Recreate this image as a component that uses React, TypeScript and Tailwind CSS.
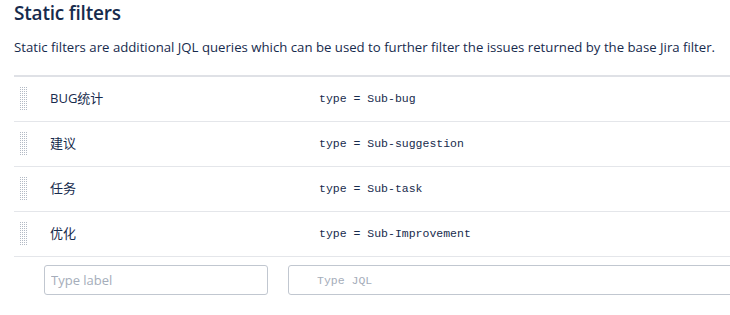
import React from "react";

const filters = [
  { label: "BUG统计", jql: "type = Sub-bug" },
  { label: "建议", jql: "type = Sub-suggestion" },
  { label: "任务", jql: "type = Sub-task" },
  { label: "优化", jql: "type = Sub-Improvement" },
];

function DragHandle() {
  const dots = [];
  for (let r = 0; r < 12; r++) {
    for (let c = 0; c < 4; c++) {
      dots.push(<rect key={r + "-" + c} x={c * 2} y={r * 2} width="1" height="1" fill="#b3bac5" />);
    }
  }
  return (
    <svg width="8" height="24" viewBox="0 0 8 24" className="block">
      {dots}
    </svg>
  );
}

export default function App() {
  return (
    <div
      className="w-[730px] h-[315px] overflow-hidden bg-white text-[#172b4d] px-[14px]"
      style={{ fontFamily: '"Open Sans", "Noto Sans CJK SC", sans-serif' }}
    >
      <h2 className="pt-[1px] text-[19px] leading-[24px] font-semibold tracking-[-0.2px]">Static filters</h2>
      <p className="mt-[13px] text-[13.2px] leading-[18px] whitespace-nowrap">
        Static filters are additional JQL queries which can be used to further filter the issues returned by the base Jira filter.
      </p>

      <div className="mt-[19px] w-[740px] border-t-2 border-[#dfe1e6]">
        {filters.map((f) => (
          <div key={f.label} className="flex items-center h-[45px] border-b border-[#e4e6ea]">
            <div className="w-[36px] pl-[6px]">
              <DragHandle />
            </div>
            <div className="w-[269px] text-[13px]">{f.label}</div>
            <div className="text-[11.5px] font-['Liberation_Mono',monospace]">{f.jql}</div>
          </div>
        ))}
        <div className="flex pt-[8px] pl-[30px] gap-[20px]">
          <input
            placeholder="Type label"
            className="w-[224px] h-[30px] rounded-[3px] border border-[#c1c7d0] px-[6px] text-[13px] outline-none placeholder:text-[#a5adba]"
          />
          <input
            placeholder="Type JQL"
            className="w-[460px] h-[30px] rounded-[3px] border border-[#c1c7d0] pl-[28px] text-[11.5px] font-['Liberation_Mono',monospace] outline-none placeholder:text-[#a5adba]"
          />
        </div>
      </div>
    </div>
  );
}
